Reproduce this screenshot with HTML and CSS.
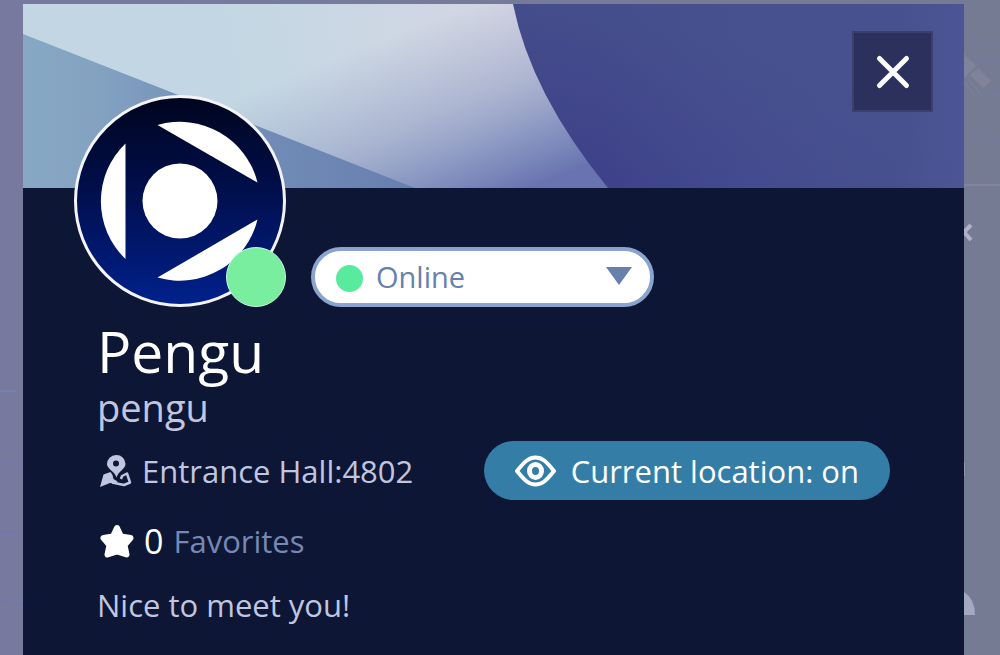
FILE: index.html
```
<!DOCTYPE html>
<html lang="en">
<head>
  <meta charset="UTF-8">
  <meta name="viewport" content="width=device-width, initial-scale=1.0">
  <title>Pengu</title>
  <link rel="stylesheet" href="styles.css">
</head>
<body>
  <svg class="scene scene-left" width="23" height="655" aria-hidden="true">
    <path d="M0 391h16" stroke="#708bb7"/>
    <path d="M0 461l20 4M0 532l22 1M0 600l23 5" stroke="#7475b1" fill="none"/>
  </svg>
  <svg class="scene scene-right" width="36" height="655" aria-hidden="true">
    <path d="M0 46h36M0 62h36M0 95h36M0 141h36" stroke="#757c99" stroke-width="2"/>
    <path d="M0 54l12 12-12 12zM14 68l13 13-8 7-13-13z" fill="#80849a"/>
    <path d="M0 82l12 15M4 79l12 14" stroke="#80849a"/>
    <path d="M0 185h36" stroke="#8b90a7"/>
    <path d="M7 225l-7 7 7 8" fill="none" stroke="#b1b2c8" stroke-width="4"/>
    <path d="M0 592q11 7 11 23H0z" fill="#a5a8c2"/>
    <path d="M0 462v14" stroke="#a5a8c2"/>
  </svg>

  <main class="card">
    <div class="banner">
      <svg class="banner-art" viewBox="0 0 941 184" preserveAspectRatio="none" aria-hidden="true">
        <defs>
          <linearGradient id="sky" gradientUnits="userSpaceOnUse" x1="200" y1="60" x2="520" y2="0">
            <stop offset="0" stop-color="#c2d7e3"/>
            <stop offset="1" stop-color="#d8d6e4"/>
          </linearGradient>
          <linearGradient id="haze" gradientUnits="userSpaceOnUse" x1="447" y1="0" x2="519" y2="179">
            <stop offset="0" stop-color="#9aa6c8" stop-opacity="0"/>
            <stop offset=".45" stop-color="#96a2c6" stop-opacity=".6"/>
            <stop offset=".75" stop-color="#7b8abb" stop-opacity=".85"/>
            <stop offset="1" stop-color="#6774b0"/>
          </linearGradient>
          <linearGradient id="hill" x1="0" y1="0" x2="1" y2="0">
            <stop offset="0" stop-color="#87a8c4"/>
            <stop offset=".2" stop-color="#83a2c1"/>
            <stop offset=".4" stop-color="#7793bb"/>
            <stop offset="1" stop-color="#677faf"/>
          </linearGradient>
          <linearGradient id="planet" gradientUnits="userSpaceOnUse" x1="590" y1="200" x2="640" y2="20">
            <stop offset="0" stop-color="#3d4089"/>
            <stop offset="1" stop-color="#454e8c"/>
          </linearGradient>
          <linearGradient id="edge" x1="0" y1="0" x2="1" y2="0">
            <stop offset=".2" stop-color="#4c5696" stop-opacity="0"/>
            <stop offset=".85" stop-color="#485290" stop-opacity=".8"/>
            <stop offset="1" stop-color="#4c5696"/>
          </linearGradient>
        </defs>
        <rect width="941" height="184" fill="url(#sky)"/>
        <rect width="941" height="184" fill="url(#haze)"/>
        <path d="M0 30L392 184H0z" fill="url(#hill)"/>
        <path d="M490 0Q508 90 585 184H941V0z" fill="url(#planet)"/>
        <path d="M490 0Q508 90 585 184H941V0z" fill="url(#edge)"/>
      </svg>
      <button class="close" type="button" aria-label="Close">
        <svg width="36" height="36" viewBox="0 0 36 36" aria-hidden="true">
          <path d="M4.500 4.500l27 27M31.500 4.500l-27 27" stroke="#fff" stroke-width="5" stroke-linecap="round"/>
        </svg>
      </button>
    </div>

    <div class="profile-top">
      <div class="avatar">
        <svg width="212" height="212" viewBox="0 0 212 212" role="img" aria-label="Pengu's avatar">
          <defs>
            <linearGradient id="night" x1="0" y1="0" x2="0" y2="1">
              <stop offset="0" stop-color="#00051d"/>
              <stop offset=".5" stop-color="#001052"/>
              <stop offset="1" stop-color="#00218d"/>
            </linearGradient>
          </defs>
          <circle cx="106" cy="106" r="104.500" fill="url(#night)" stroke="#f3f3f8" stroke-width="3"/>
          <circle cx="106" cy="106" r="37.500" fill="#fff"/>
          <g fill="#fff">
            <path d="M51.500 48.500V164A80 80 0 0 1 51.500 48.500z"/>
            <path d="M83.500 30A80 80 0 0 1 183.500 87.500z"/>
            <path d="M183.500 124.500A80 80 0 0 1 83.500 182.500z"/>
          </g>
        </svg>
        <span class="presence"></span>
      </div>

      <div class="status">
        <span class="status-dot"></span>
        <select class="status-select" aria-label="Status">
          <option>Online</option>
          <option>Away</option>
          <option>Busy</option>
          <option>Offline</option>
        </select>
        <svg class="status-arrow" width="26" height="18" viewBox="0 0 26 18" aria-hidden="true">
          <path d="M0 0h26L13 18z" fill="#6780ac"/>
        </svg>
      </div>
    </div>

    <div class="details">
      <h1>Pengu</h1>
      <p class="username">pengu</p>

      <div class="location">
        <svg class="icon" width="32" height="34" viewBox="0 0 32 34" aria-hidden="true">
          <path fill="#c0c6e0" fill-rule="evenodd" d="M16 1a9 9 0 0 1 9.500 9c0 5-7 7-9 13.500C14.500 17 7 15 7 10a9 9 0 0 1 9-9zm0 5.500a3 3 0 1 0 0 6 3 3 0 0 0 0-6z"/>
          <path fill="#c0c6e0" d="M3.500 20.500l7-2.500 2 3 1 4 4 2.500-1 2L10 29 0 33z"/>
          <path d="M12 28.500l12 2.500 6-2.500-3-9-5 2.500-1 3" fill="none" stroke="#c0c6e0" stroke-width="2.500" stroke-linejoin="round"/>
        </svg>
        <span class="place">Entrance Hall:4802</span>
        <button class="location-toggle" type="button" aria-pressed="true">
          <svg width="41" height="32" viewBox="0 0 41 32" fill="none" stroke="#fff" aria-hidden="true">
            <path d="M2 16C10 6 14 2.500 20.500 2.500S31 6 39 16c-8 10-12 13.500-18.500 13.500S10 26 2 16z" stroke-width="4" stroke-linejoin="round"/>
            <ellipse cx="20.500" cy="16" rx="6" ry="6.500" stroke-width="5"/>
          </svg>
          Current location: on
        </button>
      </div>

      <div class="favorites">
        <svg class="icon" width="34" height="34" viewBox="0 0 34 34" aria-hidden="true">
          <path d="M17 4l4 8.500 9.500 1.500-6 7 2 9.500-9.500-3-9.500 3 2-9.500-6-7 9.500-1.500z" fill="#fff" stroke="#fff" stroke-width="6" stroke-linejoin="round"/>
        </svg>
        <span class="count">0</span>
        <span class="label">Favorites</span>
      </div>

      <p class="bio">Nice to meet you!</p>
    </div>
  </main>
</body>
</html>
```

FILE: styles.css
```
* {
  box-sizing: border-box;
}

body {
  margin: 0;
  padding: 4px 36px 0 23px;
  min-height: 100vh;
  position: relative;
  background: linear-gradient(90deg, #777a9f, #767b94);
  font-family: "Open Sans", sans-serif;
  font-size: 31px;
  line-height: 40px;
  color: #c0c6e0;
}

button, select {
  font: inherit;
  cursor: pointer;
}

h1, p {
  margin: 0;
  font-weight: 400;
}

/* what shows of the room behind the card */
.scene {
  position: absolute;
  top: 0;
}

.scene-left {
  left: 0;
}

.scene-right {
  right: 0;
}

.card {
  min-height: calc(100vh - 4px);
  background: #0d1634;
}

.banner {
  position: relative;
  height: 184px;
}

.banner-art {
  display: block;
  width: 100%;
  height: 100%;
}

.close {
  position: absolute;
  top: 27px;
  right: 31px;
  width: 81px;
  height: 81px;
  padding: 0;
  display: flex;
  align-items: center;
  justify-content: center;
  background: #2b305d;
  border: 2px solid #3a3f6c;
}

.profile-top {
  position: relative;
  display: flex;
  align-items: flex-end;
  gap: 25px;
  margin-top: -93px;
  padding-left: 51px;
}

.avatar {
  position: relative;
  height: 212px;
}

.avatar svg {
  display: block;
}

.presence {
  position: absolute;
  right: 0;
  bottom: 0;
  width: 60px;
  height: 60px;
  border-radius: 50%;
  background: #79ee9f;
  border: 1px solid #c5f8e0;
}

.status {
  position: relative;
  width: 343px;
}

.status-select {
  display: block;
  width: 100%;
  height: 60px;
  padding: 0 60px 0 61px;
  appearance: none;
  background: #fff;
  border: 4px solid #8ba4cf;
  border-radius: 30px;
  font-size: 29px;
  color: #6780ac;
}

.status-dot {
  position: absolute;
  left: 25px;
  top: 18px;
  width: 27px;
  height: 27px;
  border-radius: 50%;
  background: #58eb9e;
}

.status-arrow {
  position: absolute;
  right: 22px;
  top: 20px;
  pointer-events: none;
}

.details {
  padding: 12px 74px 24px;
}

h1 {
  font-size: 57px;
  line-height: 64px;
  color: #fff;
}

.username {
  font-size: 38px;
  line-height: 48px;
}

.location {
  display: flex;
  align-items: center;
  margin-top: 10px;
}

.icon {
  margin: 0 10px 0 3px;
}

.location-toggle {
  display: flex;
  align-items: center;
  gap: 15px;
  height: 59px;
  margin-left: auto;
  padding: 0 31px;
  background: #347da7;
  border: 0;
  border-radius: 30px;
  color: #fff;
}

.favorites {
  display: flex;
  align-items: center;
  margin-top: 21px;
}

.count {
  margin-right: 10px;
  font-size: 34px;
  color: #fff;
}

.label {
  color: #7788b4;
}

.bio {
  margin-top: 24px;
}
```
